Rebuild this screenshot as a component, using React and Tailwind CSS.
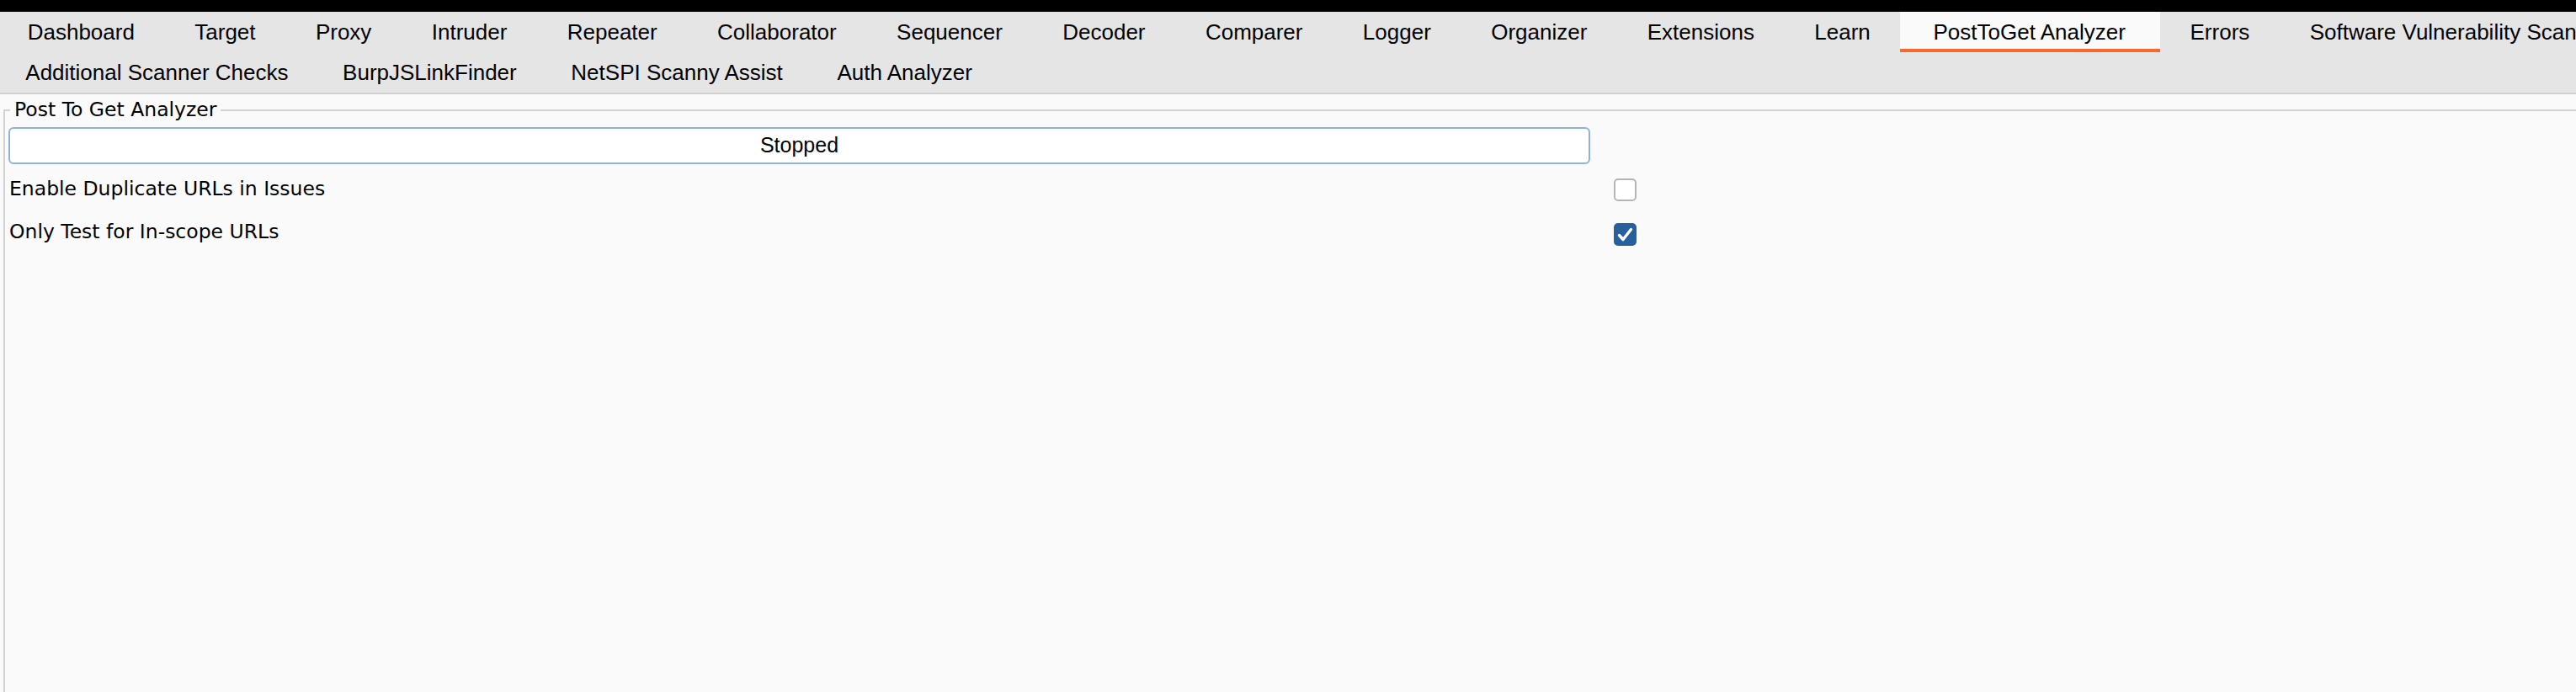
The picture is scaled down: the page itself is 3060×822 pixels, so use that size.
const ROW_ONE = [
  'Dashboard',
  'Target',
  'Proxy',
  'Intruder',
  'Repeater',
  'Collaborator',
  'Sequencer',
  'Decoder',
  'Comparer',
  'Logger',
  'Organizer',
  'Extensions',
  'Learn',
  'PostToGet Analyzer',
  'Errors',
  'Software Vulnerability Scanner',
];

const ROW_TWO = ['Additional Scanner Checks', 'BurpJSLinkFinder', 'NetSPI Scanny Assist', 'Auth Analyzer'];

const ACTIVE = 'PostToGet Analyzer';

const Tab = ({ label, wide }) => {
  const active = label === ACTIVE;
  let pad = wide ? 'px-[35.7px] ' : 'px-[32.3px] ';
  if (active) pad = 'pl-[39px] pr-[41px] ';
  return (
    <div
      className={
        pad +
        'h-[48px] leading-[48px] shrink-0 whitespace-nowrap ' +
        (active ? 'bg-[#fafafa] shadow-[inset_0_-4px_0_#f9682f]' : '')
      }
    >
      {label}
    </div>
  );
};

const CheckBox = ({ checked, className }) => (
  <div
    className={
      'w-[27px] h-[27px] rounded-[5px] flex items-center justify-center ' +
      (checked ? 'bg-[#27619d] ' : 'bg-white border-2 border-[#b5b5b5] ') +
      className
    }
  >
    {checked && (
      <svg width="27" height="27" viewBox="0 0 27 27">
        <path d="M6.5 14.5 L11 19.5 L20.5 7.5" fill="none" stroke="white" strokeWidth="3.4" strokeLinecap="round" strokeLinejoin="round" />
      </svg>
    )}
  </div>
);

export default function App() {
  return (
    <div className="w-full h-[822px] overflow-hidden flex flex-col bg-[#fafafa] text-black">
      <div className="h-[14px] bg-black shrink-0" />

      {/* tab strip, wrapped over two rows */}
      <div className="shrink-0 bg-[#e5e5e5] border-b-2 border-[#cfd1d1] text-[26px] font-['Liberation_Sans',Arial,sans-serif]">
        <div className="flex overflow-hidden ml-[-3px]">
          {ROW_ONE.map((t) => (
            <Tab key={t} label={t} wide />
          ))}
        </div>
        <div className="flex overflow-hidden ml-[-2px]">
          {ROW_TWO.map((t) => (
            <Tab key={t} label={t} />
          ))}
        </div>
      </div>

      <fieldset className="flex-1 min-w-0 ml-[4px] mt-[5px] border-t-2 border-l-2 border-[#d2d2d2] pl-[4px] pt-[7px] font-['DejaVu_Sans',sans-serif]">
        <legend className="ml-[2px] px-[5px] text-[23.5px] leading-[27px]">Post To Get Analyzer</legend>

        <div className="w-[1879px] h-[44px] rounded-[6px] border-2 border-[#8cb4df] bg-white flex items-center justify-center text-[25px] font-['Liberation_Sans',Arial,sans-serif]">
          Stopped
        </div>

        <div className="mt-[4px] grid grid-cols-[1879px_27px] gap-x-[28px] text-[23.5px]">
          <div className="h-[51px] flex items-center pl-px">Enable Duplicate URLs in Issues</div>
          <div className="h-[51px] flex items-center">
            <CheckBox className="mt-[2px]" />
          </div>
          <div className="h-[51px] flex items-center pl-px">Only Test for In-scope URLs</div>
          <div className="h-[51px] flex items-center">
            <CheckBox checked className="mt-[6px]" />
          </div>
        </div>
      </fieldset>
    </div>
  );
}
